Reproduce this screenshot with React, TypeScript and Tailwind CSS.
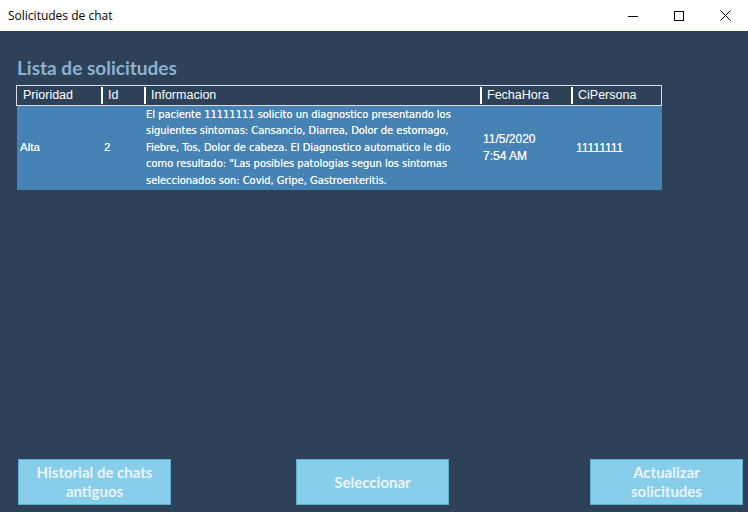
import React from "react";

const cols = [
  { label: "Prioridad", w: "w-[84px]" },
  { label: "Id", w: "w-[43px]" },
  { label: "Informacion", w: "w-[336px]" },
  { label: "FechaHora", w: "w-[91px]" },
  { label: "CiPersona", w: "flex-1" },
];

function TitleBar() {
  return (
    <div className="flex h-[31px] items-center justify-between bg-white">
      <span className="pl-[8px] text-[12px] text-black [font-family:'Open_Sans',sans-serif]">
        Solicitudes de chat
      </span>
      <div className="flex h-full">
        <div className="flex w-[46px] items-center justify-center">
          <svg width="10" height="10" viewBox="0 0 10 10">
            <path d="M0 5.5h10" stroke="#000" strokeWidth="1" />
          </svg>
        </div>
        <div className="flex w-[46px] items-center justify-center">
          <svg width="10" height="10" viewBox="0 0 10 10">
            <rect x="0.5" y="0.5" width="9" height="9" fill="none" stroke="#000" strokeWidth="1" />
          </svg>
        </div>
        <div className="flex w-[46px] items-center justify-center">
          <svg width="11" height="11" viewBox="0 0 11 11">
            <path d="M0.5 0.5l10 10M10.5 0.5l-10 10" stroke="#000" strokeWidth="1" />
          </svg>
        </div>
      </div>
    </div>
  );
}

function Button({ children }: { children: React.ReactNode }) {
  return (
    <button className="flex h-[46px] w-[153px] shrink-0 items-center justify-center border border-[#5fb0d0] bg-[#87ceeb] text-center text-[15px] font-bold leading-[19px] text-[#eef3f6] [font-family:Lato,sans-serif]">
      <span className="block w-[130px]">{children}</span>
    </button>
  );
}

export default function App() {
  return (
    <div className="flex h-[512px] w-[748px] flex-col overflow-hidden bg-[#2d4259]">
      <TitleBar />
      <div className="flex flex-1 flex-col">
        <h1 className="ml-[17px] mt-[26px] text-[19px] font-bold leading-[22px] text-[#8fb0d3] [font-family:Lato,sans-serif]">
          Lista de solicitudes
        </h1>
        <div className="ml-[16px] mt-[6px] w-[646px] [font-family:'Liberation_Sans',sans-serif]">
          <div className="flex h-[21px] items-center border border-[#dcdcdc] bg-[#2d4259] text-[12.5px] text-white">
            {cols.map((c, i) => (
              <div key={c.label} className={`${c.w} flex h-full items-center`}>
                {i > 0 && <span className="mr-[5px] h-[17px] w-[2px] bg-white" />}
                <span className={i === 0 ? "pl-[6px]" : ""}>{c.label}</span>
              </div>
            ))}
          </div>
          <div className="ml-[1px] flex h-[84px] w-[645px] items-center bg-[#4682b4] text-[11.5px] text-[#f4f6f8] [text-shadow:0_0_0.5px_#fff]">
            <div className="w-[84px] pl-[3px]">Alta</div>
            <div className="w-[43px] pl-[3px]">2</div>
            <div className="w-[336px] pl-[2px] pr-[14px] text-[11px] leading-[16.4px] [font-family:'DejaVu_Sans_Condensed','DejaVu_Sans',sans-serif]">
              El paciente 11111111 solicito un diagnostico presentando los siguientes sintomas: Cansancio, Diarrea, Dolor de estomago, Fiebre, Tos, Dolor de cabeza. El Diagnostico automatico le dio como resultado: "Las posibles patologias segun los sintomas seleccionados son: Covid, Gripe, Gastroenteritis.
            </div>
            <div className="w-[93px] pl-[3px] text-[12px] leading-[17px]">
              11/5/2020
              <br />
              7:54 AM
            </div>
            <div className="flex-1 pl-[3px] text-[12px]">11111111</div>
          </div>
        </div>
        <div className="mt-auto mb-[7px] flex items-center gap-[125px] pl-[18px]">
          <Button>Historial de chats antiguos</Button>
          <div className="flex gap-[141px]">
            <Button>Seleccionar</Button>
            <Button>
              Actualizar
              <br />
              solicitudes
            </Button>
          </div>
        </div>
      </div>
    </div>
  );
}
